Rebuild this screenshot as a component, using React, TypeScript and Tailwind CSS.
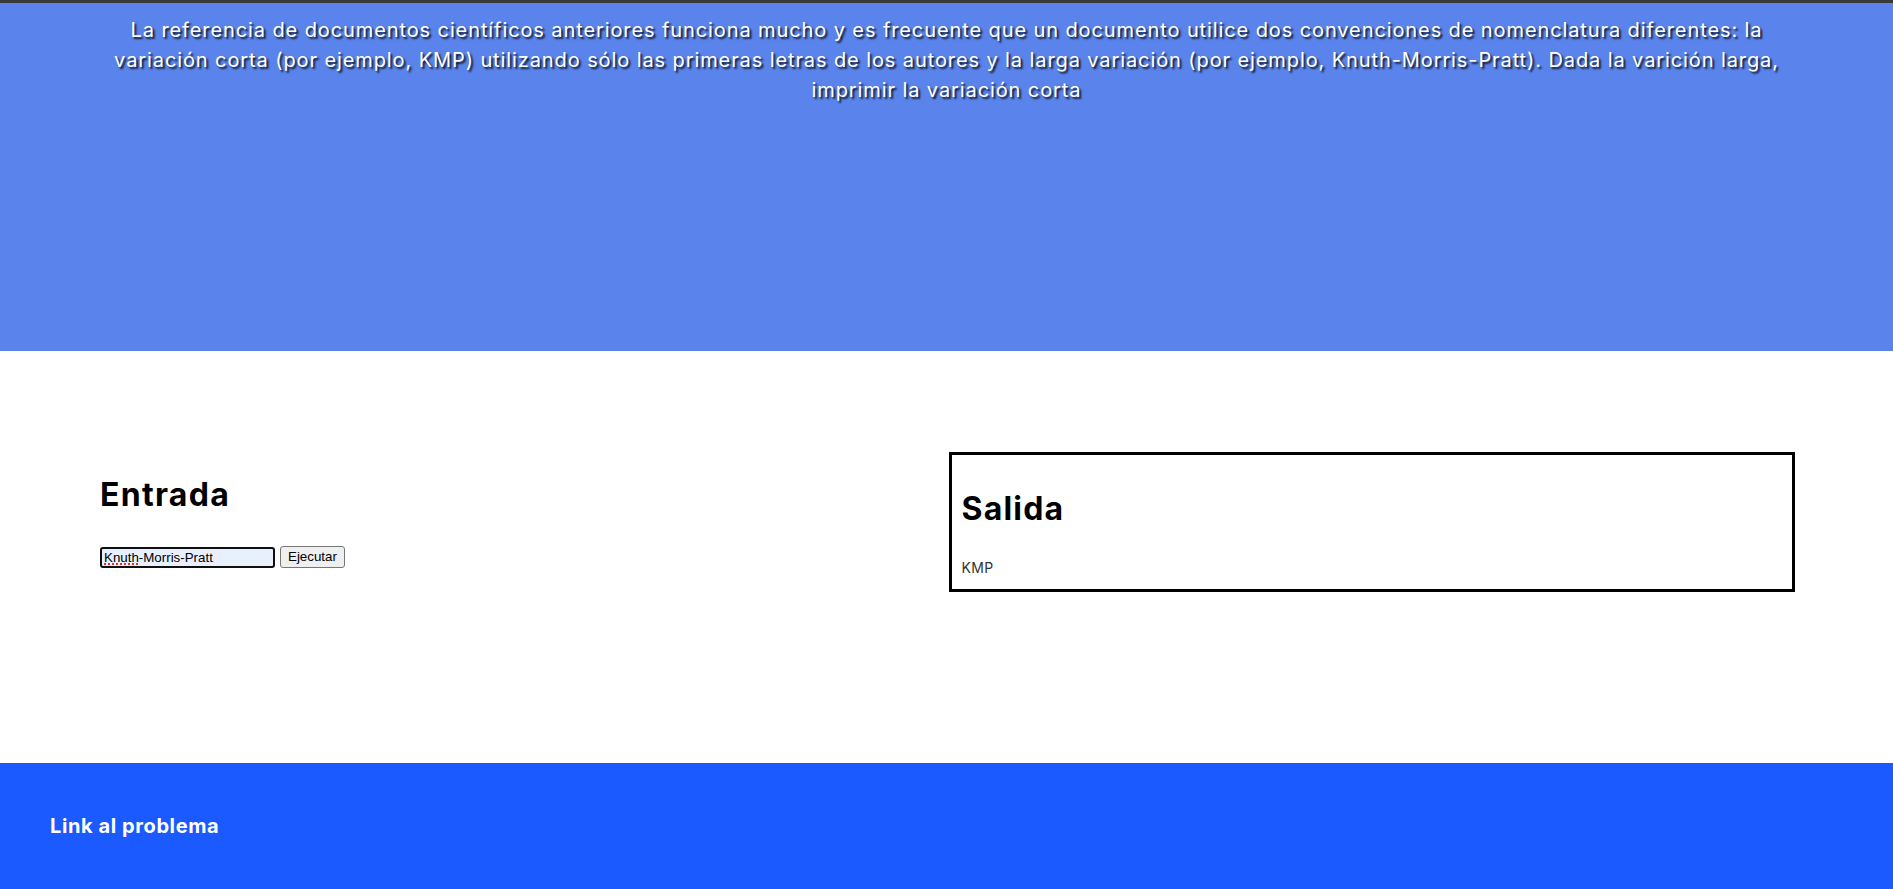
export default function App() {
  return (
    <div className="w-full min-h-screen bg-white font-['Inter',sans-serif]">
      {/* Statement */}
      <header className="h-[351px] bg-[#5a84ec] border-t-[3px] border-[#3a3a3a] pt-[12px] text-center text-white text-[20px] leading-[30px] tracking-[0.9px] [text-shadow:2px_2px_2px_rgba(0,0,0,0.85)]">
        <p>
          La referencia de documentos científicos anteriores funciona mucho y es frecuente que un documento utilice dos convenciones de nomenclatura diferentes: la
          <br />
          variación corta (por ejemplo, KMP) utilizando sólo las primeras letras de los autores y la larga variación (por ejemplo, Knuth-Morris-Pratt). Dada la varición larga,
          <br />
          imprimir la variación corta
        </p>
      </header>

      {/* Entrada / Salida */}
      <main className="h-[412px] grid grid-cols-2 gap-[2px] pl-[100px] pr-[98px] pt-[101px] items-start">
        <div className="pt-[19px]">
          <h2 className="text-[32px] leading-[48px] font-bold tracking-[1.3px] text-black">Entrada</h2>
          <div className="mt-[27px] flex items-center gap-[5px] font-['Liberation_Sans',Arial,sans-serif] text-[13.33px] text-black">
            <div className="relative">
              <input
                readOnly
                value="Knuth-Morris-Pratt"
                className="w-[175px] h-[21px] border-2 border-[#101010] rounded-[3px] bg-[#e8f0fe] px-[2px] outline-none"
              />
              <span className="absolute left-[4px] top-[16px] w-[34px] border-b-2 border-dotted border-[#e0312b]" />
            </div>
            <button className="h-[22px] px-[7px] border border-[#767676] bg-[#efefef] rounded-[3px]">
              Ejecutar
            </button>
          </div>
        </div>

        <div className="h-[140px] border-[3px] border-black px-[10px] pt-[30px]">
          <h2 className="text-[32px] leading-[48px] font-bold tracking-[1.2px] text-black">Salida</h2>
          <p className="mt-[25px] text-[14px] leading-[20px] tracking-[0.3px] text-[#333]">KMP</p>
        </div>
      </main>

      {/* Footer */}
      <footer className="h-[126px] bg-[#1a5aff] flex items-center px-[50px]">
        <h3 className="text-white font-bold text-[20px] tracking-[0.6px]">Link al problema</h3>
      </footer>
    </div>
  );
}
